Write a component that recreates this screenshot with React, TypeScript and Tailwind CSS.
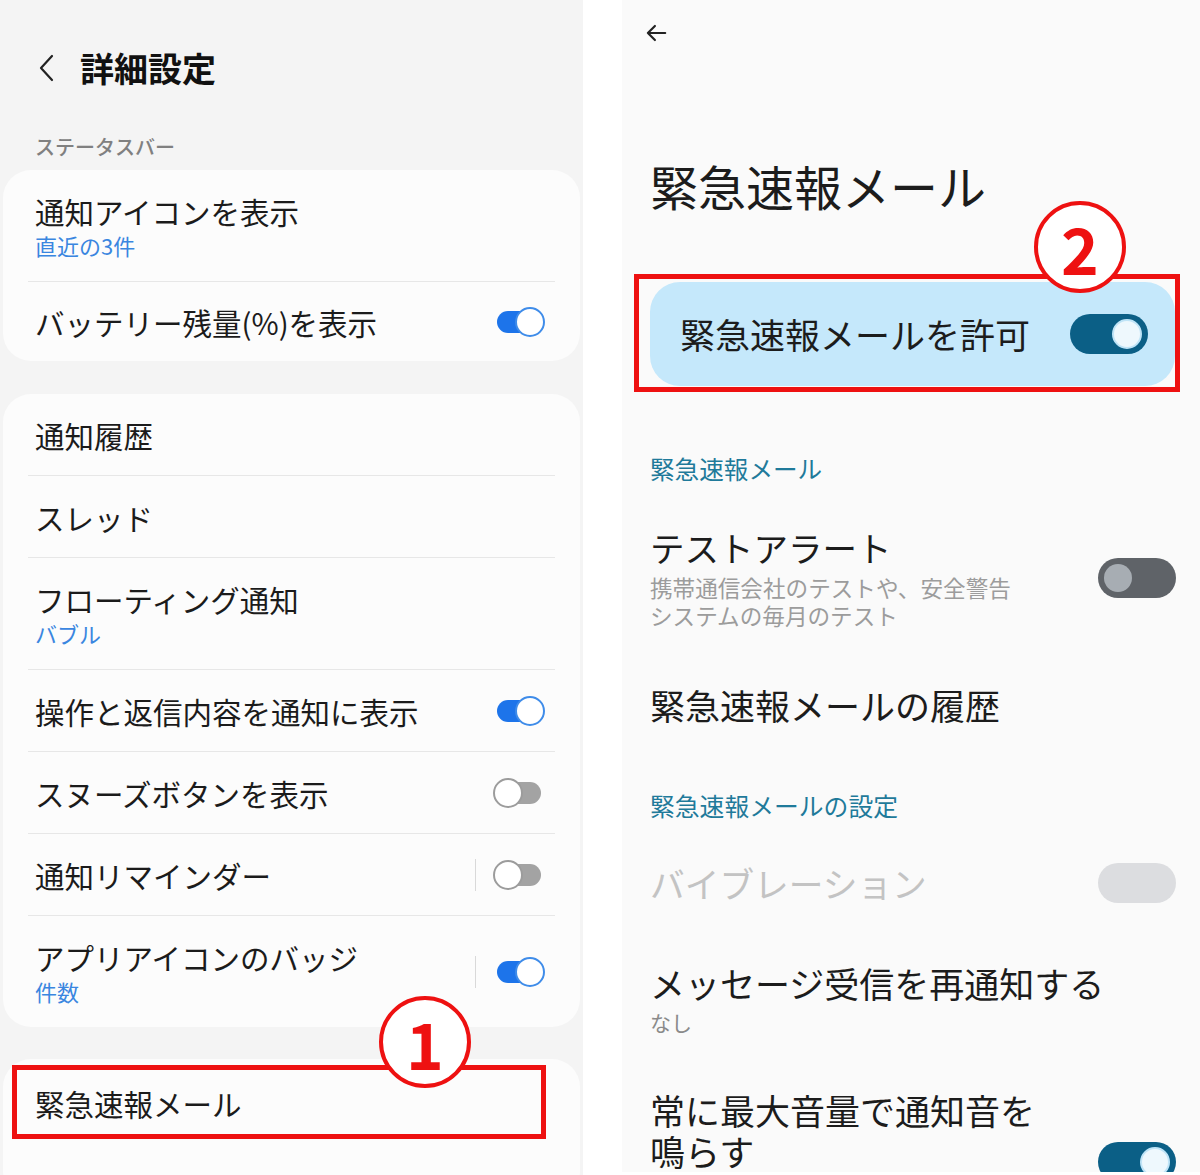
import React from "react";

const jp = "font-['Noto_Sans_CJK_JP','Noto_Sans',sans-serif]";

function SamsungToggle({ on }: { on: boolean }) {
  return (
    <div className="relative h-[30px] w-[52px] shrink-0">
      <div
        className={`absolute inset-y-[4px] left-[4px] right-[4px] rounded-full ${
          on ? "bg-[#1d74ea]" : "bg-[#a3a3a3]"
        }`}
      />
      <div
        className={`absolute top-0 h-[30px] w-[30px] rounded-full border-2 bg-white ${
          on ? "right-0 border-[#3f8ce9]" : "left-0 border-[#9c9c9c]"
        }`}
      />
    </div>
  );
}

function MaterialToggle({ state }: { state: "on" | "off" | "disabled" }) {
  if (state === "disabled") {
    return <div className="h-[40px] w-[78px] shrink-0 rounded-full bg-[#dcdde0]" />;
  }
  const on = state === "on";
  return (
    <div
      className={`flex h-[40px] w-[78px] shrink-0 items-center rounded-full px-[6px] ${
        on ? "justify-end bg-[#0b5f86]" : "justify-start bg-[#5f6368]"
      }`}
    >
      <div
        className={`rounded-full ${
          on
            ? "h-[30px] w-[30px] border-2 border-[#bfe4f7] bg-[#eef8fd]"
            : "h-[28px] w-[28px] bg-[#a7adb3]"
        }`}
      />
    </div>
  );
}

function Divider() {
  return <div className="mx-[25px] h-px bg-[#e7e7e7]" />;
}

function Row({
  title,
  sub,
  toggle,
  sep,
}: {
  title: string;
  sub?: string;
  toggle?: boolean;
  sep?: boolean;
}) {
  return (
    <div
      className={`flex items-center justify-between pl-[32px] pr-[35px] ${
        sub ? "pt-[22px] pb-[21px]" : "h-[81px]"
      }`}
    >
      <div>
        <div className="text-[29.5px] leading-[38px] text-[#1b1b1b]">{title}</div>
        {sub && <div className="text-[22px] leading-[30px] text-[#3a86e0]">{sub}</div>}
      </div>
      {toggle !== undefined && (
        <div className="flex items-center">
          {sep && <div className="mr-[17px] h-[32px] w-px bg-[#d9d9d9]" />}
          <SamsungToggle on={toggle} />
        </div>
      )}
    </div>
  );
}

function Badge({ n }: { n: string }) {
  return (
    <div className="flex h-[92px] w-[92px] items-center justify-center rounded-full border-[4px] border-[#ee1111] bg-white">
      <span className="font-['Noto_Sans_CJK_JP',sans-serif] text-[64px] font-bold leading-none text-[#ee1111]">
        {n}
      </span>
    </div>
  );
}

function LeftPanel() {
  return (
    <div className="h-[1175px] w-[583px] shrink-0 overflow-hidden bg-[#f4f4f4] px-[3px]">
      <div className="mt-[46px] flex h-[44px] items-center">
        <svg width="20" height="28" viewBox="0 0 20 28" className="ml-[34px]">
          <polyline points="15,2 4,14 15,26" fill="none" stroke="#222" strokeWidth="2.2" strokeLinecap="round" strokeLinejoin="round" />
        </svg>
        <h1 className="ml-[23px] text-[34px] font-bold leading-[44px] text-[#111]">詳細設定</h1>
      </div>
      <div className="mt-[43px] pl-[32px] text-[20px] font-medium leading-[28px] text-[#808080]">
        ステータスバー
      </div>

      <div className="mt-[9px] rounded-[28px] bg-[#fcfcfc]">
        <Row title="通知アイコンを表示" sub="直近の3件" />
        <Divider />
        <div className="flex h-[79px] items-center justify-between pl-[32px] pr-[35px]">
          <div className="text-[29.5px] leading-[38px] text-[#1b1b1b]">バッテリー残量(%)を表示</div>
          <SamsungToggle on />
        </div>
      </div>

      <div className="mt-[33px] rounded-[28px] bg-[#fcfcfc]">
        <Row title="通知履歴" />
        <Divider />
        <Row title="スレッド" />
        <Divider />
        <Row title="フローティング通知" sub="バブル" />
        <Divider />
        <Row title="操作と返信内容を通知に表示" toggle />
        <Divider />
        <Row title="スヌーズボタンを表示" toggle={false} />
        <Divider />
        <Row title="通知リマインダー" toggle={false} sep />
        <Divider />
        <Row title="アプリアイコンのバッジ" sub="件数" toggle sep />
      </div>

      <div className="relative mt-[32px] h-[140px] rounded-[28px] bg-[#fcfcfc]">
        <div className="flex h-[88px] items-center pl-[32px] text-[29.5px] leading-[38px] text-[#1b1b1b]">
          緊急速報メール
        </div>
        <div className="absolute left-[9px] top-[6px] h-[74px] w-[534px] border-[5px] border-[#ee1111]" />
        <div className="absolute left-[376px] top-[-63px]">
          <Badge n="1" />
        </div>
      </div>
    </div>
  );
}

function RightPanel() {
  return (
    <div className="h-[1172px] flex-1 overflow-hidden bg-[#fafafa] text-[#1c1c1c]">
      <div className="h-[66px] pl-[21px] pt-[20px]">
        <svg width="26" height="26" viewBox="0 0 24 24">
          <path d="M20.5 12H4.5M11 5.5l-6.5 6.5 6.5 6.5" fill="none" stroke="#222" strokeWidth="2" strokeLinecap="round" strokeLinejoin="round" />
        </svg>
      </div>
      <div className="h-[216px] pl-[28px] pt-[90px]">
        <h1 className="text-[48px] font-normal leading-[58px]">緊急速報メール</h1>
      </div>

      <div className="pl-[28px] pr-[25px]">
        <div className="relative flex h-[104px] items-center justify-between rounded-[30px] bg-[#c5e8fb] pl-[30px] pr-[27px]">
          <span className="text-[35px] leading-[44px]">緊急速報メールを許可</span>
          <MaterialToggle state="on" />
          <div className="absolute left-[-16px] top-[-8px] h-[118px] w-[546px] border-[5px] border-[#ee1111]" />
          <div className="absolute left-[384px] top-[-81px]">
            <Badge n="2" />
          </div>
        </div>
      </div>

      <div className="pl-[28px] pr-[24px]">
        <div className="mt-[62px] h-[40px] text-[24.6px] leading-[40px] text-[#1f7a9a]">緊急速報メール</div>

        <div className="flex items-center justify-between pt-[37px]">
          <div>
            <div className="text-[34.5px] leading-[44px]">テストアラート</div>
            <div className="mt-[5px] text-[22.6px] leading-[28px] text-[#9c9c9c]">
              携帯通信会社のテストや、安全警告
              <br />
              システムの毎月のテスト
            </div>
          </div>
          <MaterialToggle state="off" />
        </div>

        <div className="mt-[53px] text-[35px] leading-[44px]">緊急速報メールの履歴</div>

        <div className="mt-[58px] h-[40px] text-[24.8px] leading-[40px] text-[#1f7a9a]">緊急速報メールの設定</div>

        <div className="mt-[36px] flex items-center justify-between">
          <div className="text-[34.7px] leading-[44px] text-[#c3c3c3]">バイブレーション</div>
          <MaterialToggle state="disabled" />
        </div>

        <div className="mt-[56px] text-[35px] leading-[44px]">メッセージ受信を再通知する</div>
        <div className="mt-[3px] text-[21px] leading-[28px] text-[#8a8a8a]">なし</div>

        <div className="mt-[53px] flex items-start justify-between">
          <div className="text-[35px] leading-[41px]">
            常に最大音量で通知音を
            <br />
            鳴らす
          </div>
          <div className="mt-[53px]">
            <MaterialToggle state="on" />
          </div>
        </div>
      </div>
    </div>
  );
}

export default function App() {
  return (
    <div className={`flex h-[1175px] w-[1200px] overflow-hidden bg-white ${jp}`}>
      <LeftPanel />
      <div className="w-[39px] shrink-0 bg-white" />
      <RightPanel />
    </div>
  );
}
